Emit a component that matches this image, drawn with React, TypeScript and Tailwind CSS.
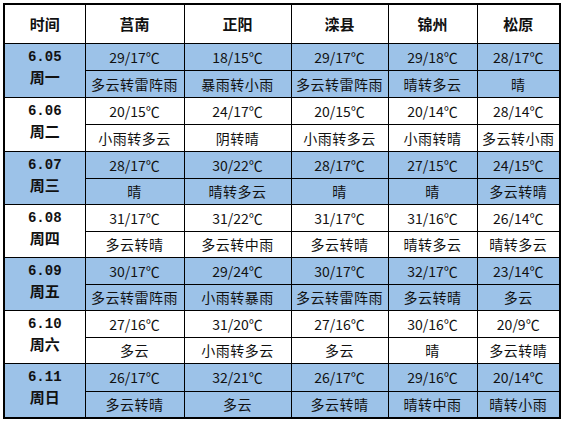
import React from "react";

const cities = ["莒南", "正阳", "滦县", "锦州", "松原"];

type Day = { d: string; w: string; blue: boolean; cells: [string, string][] };

const days: Day[] = [
  { d: "6.05", w: "周一", blue: true, cells: [["29/17", "多云转雷阵雨"], ["18/15", "暴雨转小雨"], ["29/17", "多云转雷阵雨"], ["29/18", "晴转多云"], ["28/17", "晴"]] },
  { d: "6.06", w: "周二", blue: false, cells: [["20/15", "小雨转多云"], ["24/17", "阴转晴"], ["20/15", "小雨转多云"], ["20/14", "小雨转晴"], ["28/14", "多云转小雨"]] },
  { d: "6.07", w: "周三", blue: true, cells: [["28/17", "晴"], ["30/22", "晴转多云"], ["28/17", "晴"], ["27/15", "晴"], ["24/15", "多云转晴"]] },
  { d: "6.08", w: "周四", blue: false, cells: [["31/17", "多云转晴"], ["31/22", "多云转中雨"], ["31/17", "多云转晴"], ["31/16", "晴转多云"], ["26/14", "晴转多云"]] },
  { d: "6.09", w: "周五", blue: true, cells: [["30/17", "多云转雷阵雨"], ["29/24", "小雨转暴雨"], ["30/17", "多云转雷阵雨"], ["32/17", "多云转晴"], ["23/14", "多云"]] },
  { d: "6.10", w: "周六", blue: false, cells: [["27/16", "多云"], ["31/20", "小雨转多云"], ["27/16", "多云"], ["30/16", "晴"], ["20/9", "多云转晴"]] },
  { d: "6.11", w: "周日", blue: true, cells: [["26/17", "多云转晴"], ["32/21", "多云"], ["26/17", "多云转晴"], ["29/16", "晴转中雨"], ["20/14", "晴转小雨"]] },
];

const heights: [string, string][] = [
  ["h-[27px]", "h-[27px]"],
  ["h-[27px]", "h-[27px]"],
  ["h-[27px]", "h-[26px]"],
  ["h-[27px]", "h-[26px]"],
  ["h-[27px]", "h-[26px]"],
  ["h-[27px]", "h-[26px]"],
  ["h-[28px]", "h-[27px]"],
];

export default function App() {
  return (
    <div className="w-[563px] h-[423px] bg-white pl-[3px] pt-[3px]" style={{ fontFamily: '"Noto Sans CJK SC", "Noto Sans", sans-serif' }}>
      <table className="table-fixed border-collapse border-2 border-black w-[556px] text-[#111]">
        <colgroup>
          <col className="w-[81px]" />
          <col className="w-[99px]" />
          <col className="w-[107px]" />
          <col className="w-[97px]" />
          <col className="w-[89px]" />
          <col className="w-[83px]" />
        </colgroup>
        <thead>
          <tr className="h-[39px]">
            <th className="border border-black text-[15px] font-bold p-0 text-center">时间</th>
            {cities.map((c) => (
              <th key={c} className="border border-black text-[15px] font-bold p-0 text-center">{c}</th>
            ))}
          </tr>
        </thead>
        <tbody>
          {days.map((day, i) => {
            const bg = day.blue ? "bg-[#9cc2e8]" : "bg-white";
            return (
              <React.Fragment key={day.d}>
                <tr className={`${heights[i][0]} ${bg}`}>
                  <td rowSpan={2} className="border border-black p-0 text-center align-middle">
                    <div className="flex flex-col items-center pb-[6px] font-bold leading-[20px]">
                      <span className="text-[14px]" style={{ fontFamily: '"Liberation Mono", monospace' }}>{day.d}</span>
                      <span className="text-[15px]">{day.w}</span>
                    </div>
                  </td>
                  {day.cells.map(([t], j) => (
                    <td key={j} className="border border-black p-0 text-center text-[14px] leading-none">
                      {t}
                      <span className="inline-block w-[14px] text-left [font-feature-settings:'fwid']">℃</span>
                    </td>
                  ))}
                </tr>
                <tr className={`${heights[i][1]} ${bg}`}>
                  {day.cells.map(([, w], j) => (
                    <td key={j} className="border border-black p-0 text-center text-[14px] tracking-[0.5px] leading-none whitespace-nowrap">
                      {w}
                    </td>
                  ))}
                </tr>
              </React.Fragment>
            );
          })}
        </tbody>
      </table>
    </div>
  );
}
